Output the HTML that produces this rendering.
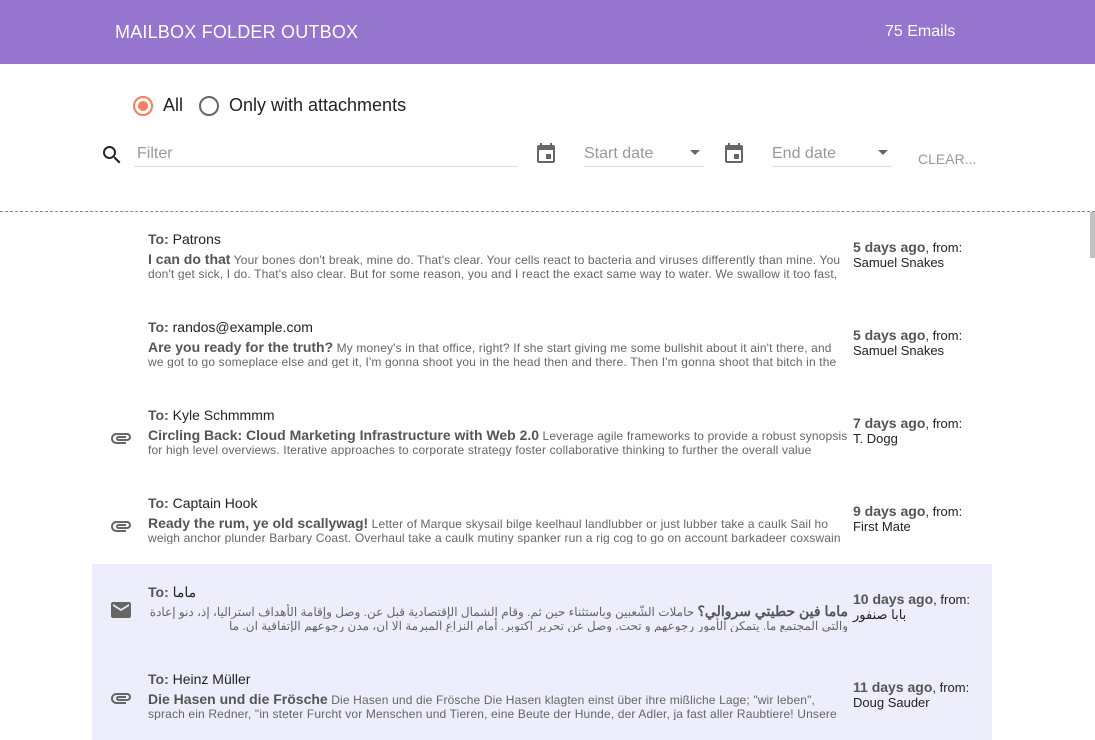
<!DOCTYPE html>
<html><head><meta charset="utf-8"><style>
*{box-sizing:border-box;margin:0;padding:0}
body{width:1095px;height:740px;overflow:hidden;background:#fff;font-family:"Liberation Sans","Noto Sans CJK SC",sans-serif;position:relative;color:#222}
.hdr{position:absolute;left:0;top:0;width:1095px;height:64px;background:#9575cd;color:#fff}
.hdr .t{position:absolute;left:115px;top:22px;font-size:18px;letter-spacing:.2px}
.hdr .c{position:absolute;left:885px;top:23px;font-size:16px}
.abs{position:absolute}
.radio{position:absolute;width:20px;height:20px;border-radius:50%;border:2px solid #666}
.lbl{position:absolute;font-size:18px;color:#222}
.inp{position:absolute;border-bottom:1px solid #ddd;color:#999;font-size:16px;height:26px;padding-top:4px}
.row{position:absolute;left:92px;width:900px;height:88px}
.row.hl{background:#ededfb}
.to{position:absolute;left:56px;top:3px;font-size:14px;color:#222}
.to b{color:#555}
.body{position:absolute;left:56px;top:24px;width:700px;font-size:12px;line-height:14px;color:#666;height:28px;overflow:hidden;letter-spacing:.15px}
.body b{font-size:14px;color:#555;letter-spacing:0}
.rt{position:absolute;left:761px;top:12px;font-size:13px;line-height:15px;color:#222}
.rt b{color:#555;font-size:14px}
.ic{position:absolute;left:17px;top:22px}
</style></head><body>
<div class="hdr"><div class="t">MAILBOX FOLDER OUTBOX</div><div class="c">75 Emails</div></div>
<div class="radio" style="left:133px;top:96px;border-color:#ff7a59"><div style="position:absolute;left:3px;top:3px;width:10px;height:10px;border-radius:50%;background:#ff7a59"></div></div>
<div class="lbl" style="left:163px;top:95px">All</div>
<div class="radio" style="left:199px;top:96px"></div>
<div class="lbl" style="left:229px;top:95px">Only with attachments</div>
<svg class="abs" style="left:100px;top:143px" width="24" height="24" viewBox="0 0 24 24"><path fill="#222" d="M15.5 14h-.79l-.28-.27A6.47 6.47 0 0 0 16 9.5 6.5 6.5 0 1 0 9.5 16c1.61 0 3.090-.59 4.23-1.57l.27.28v.79l5 4.99L20.49 19l-4.99-5zm-6 0C7.01 14 5 11.99 5 9.5S7.01 5 9.5 5 14 7.01 14 9.5 11.99 14 9.5 14z"/></svg>
<div class="inp" style="left:134px;top:141px;width:384px;padding-left:3px">Filter</div>
<svg class="abs" style="left:534px;top:142px" width="24" height="24" viewBox="0 0 24 24"><path fill="#666" d="M17 12h-5v5h5v-5zM16 1v2H8V1H6v2H5a2 2 0 0 0-2 2v14a2 2 0 0 0 2 2h14a2 2 0 0 0 2-2V5a2 2 0 0 0-2-2h-1V1h-2zm3 18H5V8h14v11z"/></svg>
<div class="inp" style="left:584px;top:141px;width:120px">Start date<span style="position:absolute;right:4px;top:9px;border:5px solid transparent;border-top:5px solid #666"></span></div>
<svg class="abs" style="left:722px;top:142px" width="24" height="24" viewBox="0 0 24 24"><path fill="#666" d="M17 12h-5v5h5v-5zM16 1v2H8V1H6v2H5a2 2 0 0 0-2 2v14a2 2 0 0 0 2 2h14a2 2 0 0 0 2-2V5a2 2 0 0 0-2-2h-1V1h-2zm3 18H5V8h14v11z"/></svg>
<div class="inp" style="left:772px;top:141px;width:120px">End date<span style="position:absolute;right:4px;top:9px;border:5px solid transparent;border-top:5px solid #666"></span></div>
<div class="abs" style="left:918px;top:151px;font-size:14px;color:#999">CLEAR...</div>
<div class="abs" style="left:0;top:211px;width:1095px;border-top:1px dashed #888"></div>
<div class="abs" style="left:1090px;top:212px;width:5px;height:46px;background:#c1c1c1"></div>

<div class="row" style="top:228px"><div class="to"><b>To:</b> Patrons</div><div class="body"><b>I can do that</b> Your bones don't break, mine do. That's clear. Your cells react to bacteria and viruses differently than mine. You don't get sick, I do. That's also clear. But for some reason, you and I react the exact same way to water. We swallow it too fast,</div><div class="rt"><b>5 days ago</b>, from:<br>Samuel Snakes</div></div>

<div class="row" style="top:316px"><div class="to"><b>To:</b> randos@example.com</div><div class="body"><b>Are you ready for the truth?</b> My money's in that office, right? If she start giving me some bullshit about it ain't there, and we got to go someplace else and get it, I'm gonna shoot you in the head then and there. Then I'm gonna shoot that bitch in the</div><div class="rt"><b>5 days ago</b>, from:<br>Samuel Snakes</div></div>

<div class="row" style="top:404px"><svg class="ic" width="24" height="24" viewBox="0 0 24 24"><path fill="#666" d="M2 12.5C2 9.46 4.46 7 7.5 7H18c2.21 0 4 1.79 4 4s-1.79 4-4 4H9.5a2.5 2.5 0 0 1 0-5H17v2H9.41c-.55 0-.55 1 0 1H18c1.1 0 2-.9 2-2s-.9-2-2-2H7.5C5.57 9 4 10.57 4 12.5S5.57 16 7.5 16H17v2H7.5C4.46 18 2 15.54 2 12.5z"/></svg><div class="to"><b>To:</b> Kyle Schmmmm</div><div class="body"><b>Circling Back: Cloud Marketing Infrastructure with Web 2.0</b> Leverage agile frameworks to provide a robust synopsis for high level overviews. Iterative approaches to corporate strategy foster collaborative thinking to further the overall value</div><div class="rt"><b>7 days ago</b>, from:<br>T. Dogg</div></div>

<div class="row" style="top:492px"><svg class="ic" width="24" height="24" viewBox="0 0 24 24"><path fill="#666" d="M2 12.5C2 9.46 4.46 7 7.5 7H18c2.21 0 4 1.79 4 4s-1.79 4-4 4H9.5a2.5 2.5 0 0 1 0-5H17v2H9.41c-.55 0-.55 1 0 1H18c1.1 0 2-.9 2-2s-.9-2-2-2H7.5C5.57 9 4 10.57 4 12.5S5.57 16 7.5 16H17v2H7.5C4.46 18 2 15.54 2 12.5z"/></svg><div class="to"><b>To:</b> Captain Hook</div><div class="body"><b>Ready the rum, ye old scallywag!</b> Letter of Marque skysail bilge keelhaul landlubber or just lubber take a caulk Sail ho weigh anchor plunder Barbary Coast. Overhaul take a caulk mutiny spanker run a rig cog to go on account barkadeer coxswain</div><div class="rt"><b>9 days ago</b>, from:<br>First Mate</div></div>

<div class="row hl" style="top:564px;height:88px"><svg class="ic" style="top:34px" width="24" height="24" viewBox="0 0 24 24"><path fill="#666" d="M20 4H4c-1.1 0-2 .9-2 2v12c0 1.1.9 2 2 2h16c1.1 0 2-.9 2-2V6c0-1.1-.9-2-2-2zm0 4l-8 5-8-5V6l8 5 8-5v2z"/></svg><div class="to" style="top:20px"><b>To:</b> ماما</div><div class="body" dir="rtl" style="top:40px"><b>ماما فين حطيتي سروالي؟</b> حاملات الشّعبين وباستثناء حين ثم. وقام الشمال الإقتصادية قبل عن. وصل وإقامة الأهداف استراليا، إذ، دنو إعادة والتي المجتمع ما. يتمكن الأمور رجوعهم و تحت. وصل عن تحرير اكتوبر. أمام النزاع المبرمة الا ان، مدن رجوعهم الإتفاقية ان. ما</div><div class="rt" style="top:28px"><b>10 days ago</b>, from:<br>بابا صنفور</div></div>

<div class="row hl" style="top:652px;height:88px"><svg class="ic" style="top:34px" width="24" height="24" viewBox="0 0 24 24"><path fill="#666" d="M2 12.5C2 9.46 4.46 7 7.5 7H18c2.21 0 4 1.79 4 4s-1.79 4-4 4H9.5a2.5 2.5 0 0 1 0-5H17v2H9.41c-.55 0-.55 1 0 1H18c1.1 0 2-.9 2-2s-.9-2-2-2H7.5C5.57 9 4 10.57 4 12.5S5.57 16 7.5 16H17v2H7.5C4.46 18 2 15.54 2 12.5z"/></svg><div class="to" style="top:19px"><b>To:</b> Heinz Müller</div><div class="body" style="top:40px"><b>Die Hasen und die Frösche</b> Die Hasen und die Frösche Die Hasen klagten einst über ihre mißliche Lage; "wir leben", sprach ein Redner, "in steter Furcht vor Menschen und Tieren, eine Beute der Hunde, der Adler, ja fast aller Raubtiere! Unsere stete</div><div class="rt" style="top:28px"><b>11 days ago</b>, from:<br>Doug Sauder</div></div>
</body></html>
